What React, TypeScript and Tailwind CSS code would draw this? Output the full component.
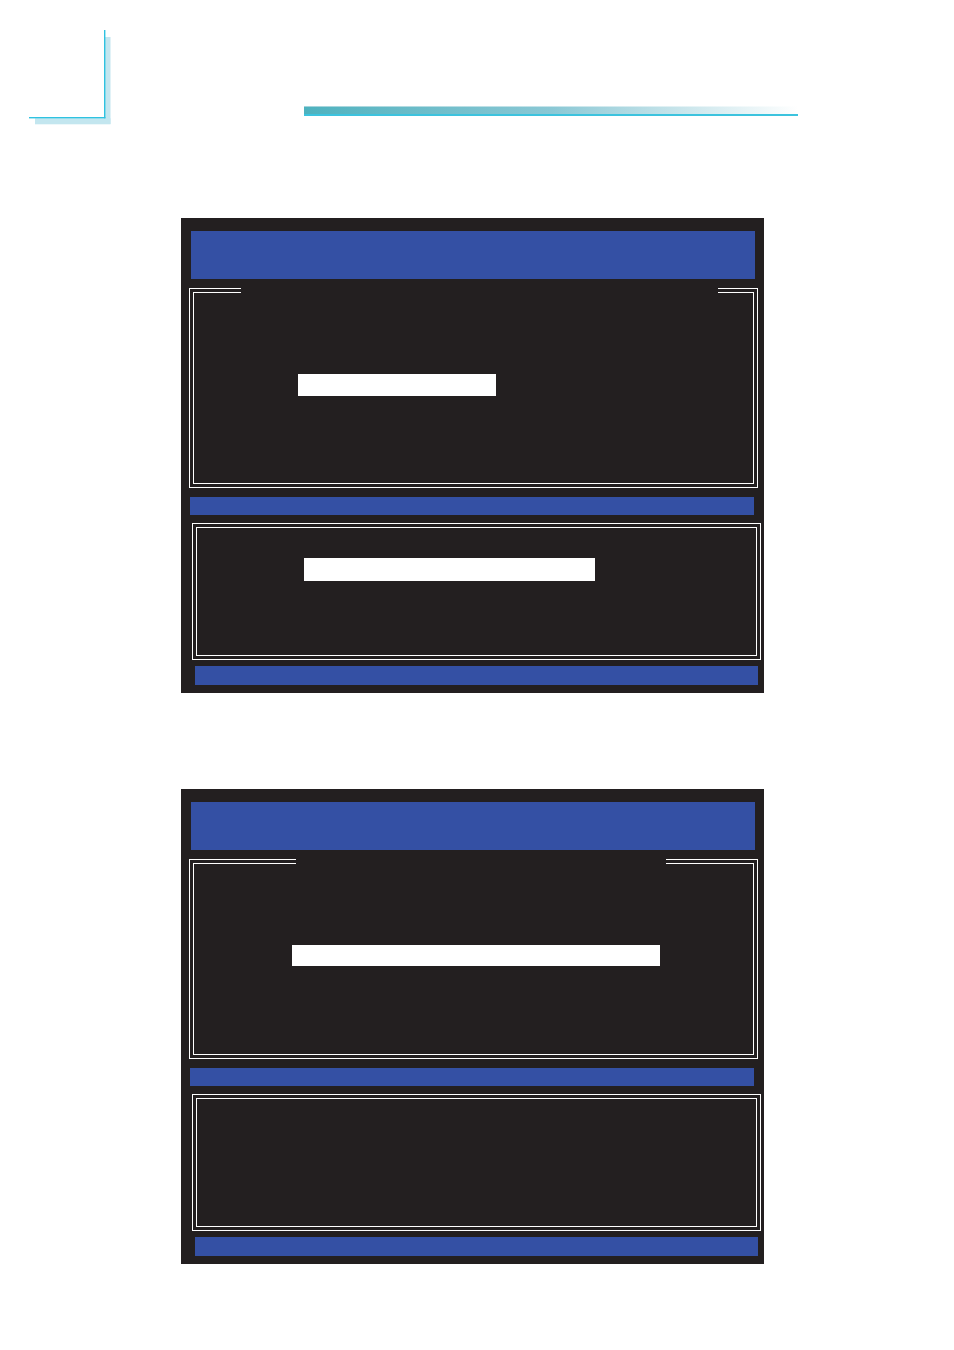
import React from "react";

type BoxProps = {
  ml: string;
  h: string;
  gap?: { left: string; width: string };
  children?: React.ReactNode;
};

// double-line frame; the optional gap is where a title would sit on the top edge
function DoubleFrame({ ml, h, gap, children }: BoxProps) {
  return (
    <div className={`relative w-[569px] border border-white p-[3px] ${ml} ${h}`}>
      <div className="relative h-full w-full border border-white">{children}</div>
      {gap && (
        <span className={`absolute top-[-2px] h-[7px] bg-[#231f20] ${gap.left} ${gap.width}`} />
      )}
    </div>
  );
}

function Screen({ barLeft, barWidth, barHeight, gap, bottomBar }: {
  barLeft: string;
  barWidth: string;
  barHeight: string;
  gap: { left: string; width: string };
  bottomBar?: { left: string; top: string; width: string; height: string };
}) {
  return (
    <div className="ml-[181px] flex w-[583px] flex-col bg-[#231f20] pb-[8px] pt-[13px]">
      <div className="ml-[10px] h-[48px] w-[564px] bg-[#3450a4]" />
      <div className="mt-[9px]">
        <DoubleFrame ml="ml-[8px]" h="h-[200px]" gap={gap}>
          <div className={`mt-[81px] bg-white ${barLeft} ${barWidth} ${barHeight}`} />
        </DoubleFrame>
      </div>
      <div className="ml-[9px] mt-[9px] h-[18px] w-[564px] bg-[#3450a4]" />
      <div className="mt-[8px]">
        <DoubleFrame ml="ml-[11px]" h="h-[137px]">
          {bottomBar && (
            <div
              className={`bg-white ${bottomBar.left} ${bottomBar.top} ${bottomBar.width} ${bottomBar.height}`}
            />
          )}
        </DoubleFrame>
      </div>
      <div className="ml-[14px] mt-[6px] h-[19px] w-[563px] bg-[#3450a4]" />
    </div>
  );
}

export default function App() {
  return (
    <div className="min-h-[1350px] w-[954px] bg-white">
      <div className="flex h-[218px] items-start">
        <svg className="ml-[29px] mt-[30px]" width="82" height="95" viewBox="0 0 82 95">
          <rect x="76" y="7" width="5.5" height="87" fill="#c3e6ef" />
          <rect x="6" y="88.3" width="75.5" height="6" fill="#c3e6ef" />
          <rect x="75" y="0" width="1.4" height="88.3" fill="#2fc2e0" />
          <rect x="0" y="87" width="76.4" height="1.4" fill="#2fc2e0" />
        </svg>
        <div className="ml-[193px] mt-[106px] w-[494px]">
          <div className="h-[1px] bg-gradient-to-r from-[#a3d4db] via-[#c6e4ea] to-white" />
          <div className="h-[7px] bg-gradient-to-r from-[#4db2bf] via-[#8ac8d5] to-white" />
          <div className="h-[2px] bg-[#3cc3de]" />
        </div>
      </div>

      <Screen
        barLeft="ml-[104px]"
        barWidth="w-[198px]"
        barHeight="h-[22px]"
        gap={{ left: "left-[51px]", width: "w-[477px]" }}
        bottomBar={{ left: "ml-[107px]", top: "mt-[30px]", width: "w-[291px]", height: "h-[23px]" }}
      />

      <div className="mt-[96px]">
        <Screen
          barLeft="ml-[98px]"
          barWidth="w-[368px]"
          barHeight="h-[21px]"
          gap={{ left: "left-[106px]", width: "w-[370px]" }}
        />
      </div>
    </div>
  );
}
